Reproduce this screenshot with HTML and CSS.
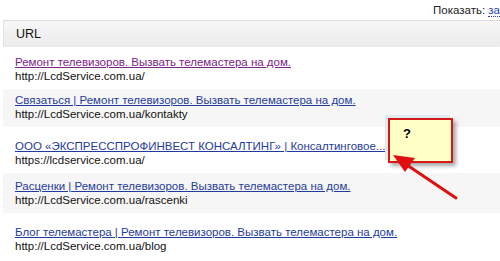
FILE: index.html
```html
<!DOCTYPE html>
<html>

<head>
    <title>URL</title>
    <link rel="stylesheet" href="styles.css">
</head>

<body>

    <div class="top-bar">
        Показать: <a href="#" class="show-link">за</a>
    </div>

    <div class="url-table">
        <div class="table-head">URL</div>

        <div class="url-row first">
            <a href="#" class="visited">Ремонт телевизоров. Вызвать телемастера на дом.</a>
            <span class="url-text">http://LcdService.com.ua/</span>
        </div>

        <div class="url-row alt">
            <a href="#">Связаться | Ремонт телевизоров. Вызвать телемастера на дом.</a>
            <span class="url-text">http://LcdService.com.ua/kontakty</span>
        </div>

        <div class="url-row tall">
            <a href="#">ООО «ЭКСПРЕССПРОФИНВЕСТ КОНСАЛТИНГ» | Консалтинговое...</a>
            <span class="url-text">https://lcdservice.com.ua/</span>
        </div>

        <div class="url-row alt mid">
            <a href="#">Расценки | Ремонт телевизоров. Вызвать телемастера на дом.</a>
            <span class="url-text">http://LcdService.com.ua/rascenki</span>
        </div>

        <div class="url-row tall">
            <a href="#">Блог телемастера | Ремонт телевизоров. Вызвать телемастера на дом.</a>
            <span class="url-text">http://LcdService.com.ua/blog</span>
        </div>
    </div>

    <div class="note">?</div>

    <svg class="arrow" width="80" height="60" viewBox="0 0 80 60">
        <line x1="64" y1="53" x2="12" y2="18" stroke="#e01010" stroke-width="3" stroke-linecap="round" />
        <polygon points="1,10 23,13 13,27" fill="#e01010" />
    </svg>

</body>

</html>
```

FILE: styles.css
```css
body {
    font-family: "Liberation Sans", Arial, sans-serif;
    font-size: 11.5px;
    margin: 0;
    background: #fff;
    color: #000;
    width: 500px;
    height: 261px;
    overflow: hidden;
    position: relative;
}

.top-bar {
    height: 20px;
    text-align: right;
    line-height: 20px;
    white-space: nowrap;
    color: #222;
}

.show-link {
    color: #2b3fa0;
    text-decoration: none;
    border-bottom: 1px dotted #2b3fa0;
}

.url-table {
    margin-left: 3px;
}

.table-head {
    height: 26px;
    line-height: 26px;
    padding-left: 12px;
    font-size: 12.5px;
    color: #111;
    border-top: 1px solid #dcdcdc;
    border-left: 1px solid #e2e2e2;
    background: linear-gradient(#f7f7f7, #ebebeb);
}

.url-row {
    display: flex;
    flex-direction: column;
    justify-content: flex-end;
    padding: 8px 12px 6px;
    height: 24px;
    line-height: 14px;
}

.url-row.first {
    height: 28px;
}

.url-row.tall {
    height: 32px;
}

.url-row.mid {
    height: 26px;
}

.url-row.alt {
    background: #f6f6f6;
}

.url-row a {
    color: #1f3c9a;
    text-decoration: underline;
    white-space: nowrap;
}

.url-row a.visited {
    color: #7a2386;
}

.url-text {
    color: #111;
    white-space: nowrap;
}

.note {
    position: absolute;
    left: 388px;
    top: 118px;
    width: 65px;
    height: 45px;
    padding: 6px 0 0 13px;
    box-sizing: border-box;
    background: #ffffc6;
    border: 2px solid #d41818;
    font-weight: bold;
    font-size: 13px;
    box-shadow: -3px -3px 0 #dfe9ef, 3px 3px 4px rgba(0, 0, 0, 0.35);
}

.arrow {
    position: absolute;
    left: 392px;
    top: 145px;
}
```
